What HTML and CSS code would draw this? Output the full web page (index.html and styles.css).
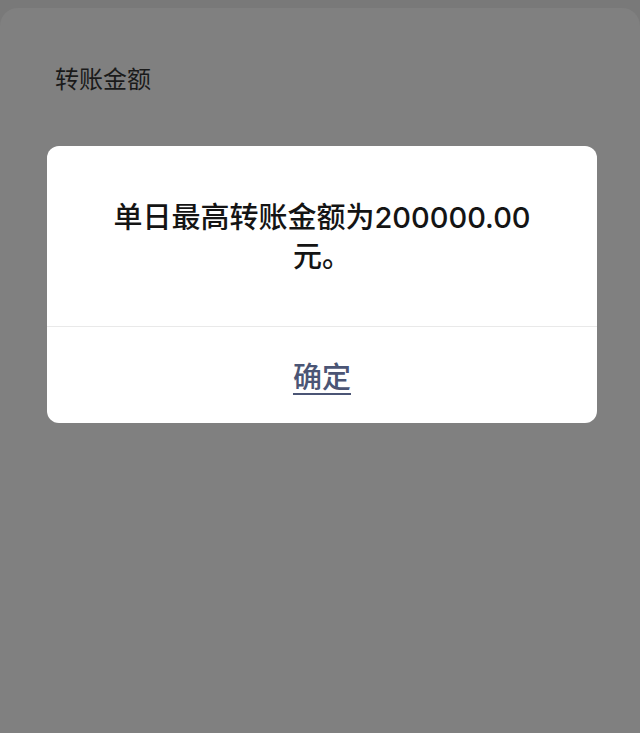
FILE: index.html
```html
<!DOCTYPE html>
<html lang="zh-CN">
<head>
    <meta charset="UTF-8">
    <meta name="viewport" content="width=device-width, initial-scale=1.0">
    <title>转账</title>
    <link rel="stylesheet" href="styles.css">
</head>
<body>

<div class="sheet">
    <div class="sheet-title">转账金额</div>

    <div class="dialog">
        <div class="dialog-message">单日最高转账金额为200000.00元。</div>
        <div class="dialog-actions">
            <a class="dialog-button" href="#">确定</a>
        </div>
    </div>
</div>

</body>
</html>
```

FILE: styles.css
```css
html, body {
    height: 100%;
}

body {
    margin: 0;
    padding: 0;
    background-color: #797979;
    font-family: "Noto Sans CJK SC", "Noto Sans", sans-serif;
    overflow: hidden;
}

.sheet {
    margin-top: 8px;
    height: calc(100% - 8px);
    background-color: #808080;
    border-radius: 18px 18px 0 0;
    padding-top: 55px;
    box-sizing: border-box;
}

.sheet-title {
    padding-left: 55px;
    font-size: 24px;
    line-height: 30px;
    color: #1a1a1a;
}

.dialog {
    margin-top: 53px;
    margin-left: 47px;
    width: 550px;
    background-color: #fff;
    border-radius: 12px;
    overflow: hidden;
}

.dialog-message {
    padding: 52px 64px 50px;
    font-family: "Inter", "Noto Sans CJK SC", sans-serif;
    font-size: 29px;
    font-weight: 500;
    line-height: 39px;
    text-align: center;
    color: #141414;
    border-bottom: 1px solid #e9e9e9;
}

.dialog-actions {
    height: 96px;
    display: flex;
    align-items: center;
    justify-content: center;
}

.dialog-button {
    font-size: 29px;
    font-weight: 500;
    color: #4b5575;
    text-decoration: underline;
    text-underline-offset: 5px;
    text-decoration-thickness: 2px;
}
```
